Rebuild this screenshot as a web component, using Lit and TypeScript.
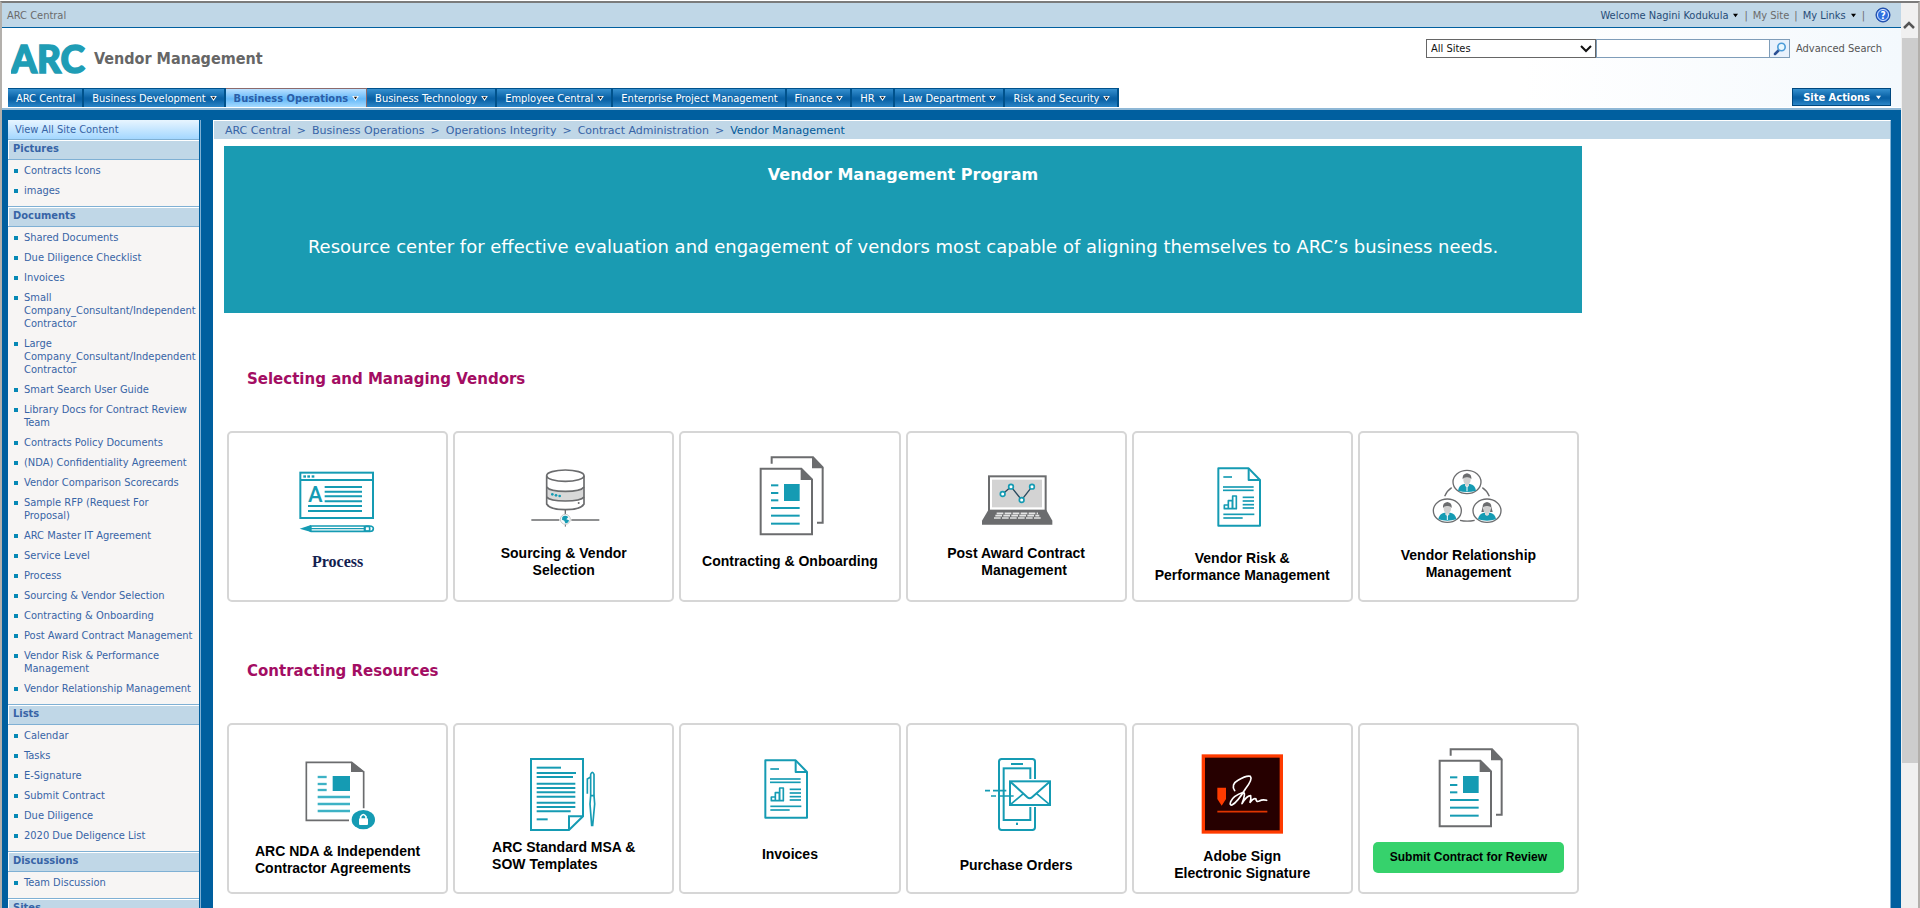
import { LitElement, html, svg, css, nothing } from "lit";
import { customElement } from "lit/decorators.js";
import { classMap } from "lit/directives/class-map.js";

interface Card {
  art: unknown;
  lines: string[];
  kind?: "serif" | "left" | "button" | "shift";
}

interface Section {
  title: string;
  items: string[];
}

const NAV: { label: string; menu: boolean; active?: boolean }[] = [
  { label: "ARC Central", menu: false },
  { label: "Business Development", menu: true },
  { label: "Business Operations", menu: true, active: true },
  { label: "Business Technology", menu: true },
  { label: "Employee Central", menu: true },
  { label: "Enterprise Project Management", menu: false },
  { label: "Finance", menu: true },
  { label: "HR", menu: true },
  { label: "Law Department", menu: true },
  { label: "Risk and Security", menu: true },
];

const CRUMBS = ["ARC Central", "Business Operations", "Operations Integrity", "Contract Administration"];

const SECTIONS: Section[] = [
  { title: "Pictures", items: ["Contracts Icons", "images"] },
  {
    title: "Documents",
    items: [
      "Shared Documents",
      "Due Diligence Checklist",
      "Invoices",
      "Small Company_Consultant/Independent Contractor",
      "Large Company_Consultant/Independent Contractor",
      "Smart Search User Guide",
      "Library Docs for Contract Review Team",
      "Contracts Policy Documents",
      "(NDA) Confidentiality Agreement",
      "Vendor Comparison Scorecards",
      "Sample RFP (Request For Proposal)",
      "ARC Master IT Agreement",
      "Service Level",
      "Process",
      "Sourcing & Vendor Selection",
      "Contracting & Onboarding",
      "Post Award Contract Management",
      "Vendor Risk & Performance Management",
      "Vendor Relationship Management",
    ],
  },
  { title: "Lists", items: ["Calendar", "Tasks", "E-Signature", "Submit Contract", "Due Diligence", "2020 Due Deligence List"] },
  { title: "Discussions", items: ["Team Discussion"] },
  { title: "Sites", items: [] },
];

const TEAL = "#159bb3";
const GREY = "#6b6c6e";

/* Artwork is drawn at three units to the pixel; h is the height in pixels above the caption. */
const art = (x: number, y: number, h: number, body: unknown) =>
  html`<svg width="217" height=${h} viewBox="${x} ${y} 651 ${h * 3}" aria-hidden="true">${body}</svg>`;

const hlines = (rows: number[][], w: number, c = TEAL) =>
  svg`<g stroke=${c} stroke-width=${w}>${rows.map(([x1, x2, y]) => svg`<line x1=${x1} x2=${x2} y1=${y} y2=${y} />`)}</g>`;

const processArt = art(30, 42, 120, svg`
  <g fill="none" stroke=${TEAL} stroke-width="6">
    <rect x="244" y="161" width="218" height="136" />
    <path d="M244 183H462" />
  </g>
  <g fill=${TEAL}><rect x="253" y="169" width="8" height="7" /><rect x="265" y="169" width="8" height="7" /><rect x="278" y="169" width="8" height="7" /></g>
  <text x="289" y="249" text-anchor="middle" font-family="Roboto, sans-serif" font-size="66" font-weight="500" fill=${TEAL}>A</text>
  ${hlines([[317, 429, 204], [317, 429, 218], [317, 429, 232], [317, 429, 247], [267, 429, 261], [267, 429, 276]], 6)}
  <path d="M242 329L276 318V339Z" fill=${TEAL} />
  <g fill="none" stroke=${TEAL} stroke-width="5">
    <path d="M262 328L276 321H452Q463 321 463 329T452 337H276Z" />
    <path d="M276 329H436M276 321V337M436 321V337" stroke-width="4" />
    <rect x="438" y="322" width="14" height="14" rx="4" />
  </g>`);

const sourcingArt = art(708, 42, 112, svg`
  <path d="M983 208Q1039 228 1095 208V238Q1039 256 983 238Z" fill="#d8d8d8" />
  <g fill="none" stroke=${GREY} stroke-width="5">
    <ellipse cx="1039" cy="170" rx="56" ry="17" />
    <path d="M983 170V255Q992 272 1039 272T1095 255V170" />
    <path d="M983 204Q992 217 1039 217T1095 204M983 234Q992 246 1039 246T1095 234" />
    <path d="M1039 273V286M937 303H1021M1057 303H1141" stroke-width="4" />
    <path d="M1039 312V323" stroke-width="3" />
  </g>
  <g fill=${TEAL}><circle cx="1000" cy="226" r="4" /><circle cx="1011" cy="229" r="4" /><circle cx="1022" cy="231" r="4" /></g>
  <circle cx="1079" cy="252" r="3" fill=${GREY} />
  <circle cx="1039" cy="301" r="15" fill="#f6fbfc" stroke="#c9c9c9" stroke-width="3" />
  <path d="M1030 294Q1038 287 1048 294L1042 301L1050 304Q1048 314 1039 313L1036 305L1029 302Z" fill=${TEAL} />`);

const contractingArt = (h: number) => art(36, 42, h, svg`
  <g fill="none" stroke=${GREY} stroke-width="6">
    <path d="M308 134V115H432L461 145V311H444" />
    <path d="M275 149H397L429 181V346H275Z" />
  </g>
  <path d="M429 114L464 148H429ZM395 147L431 183H395Z" fill=${GREY} />
  <rect x="345" y="195" width="47" height="51" fill=${TEAL} />
  ${hlines([[306, 328, 199], [306, 328, 222], [306, 328, 244], [306, 392, 267], [306, 392, 290], [306, 392, 314]], 6)}`);

const laptopArt = art(714, 42, 112, svg`
  <rect x="957" y="172" width="170" height="103" fill="#fff" stroke=${GREY} stroke-width="6" />
  <rect x="966" y="182" width="150" height="83" fill="#d3d3d3" />
  <path d="M955 273H1129L1147 305V317H936V305Z" fill=${GREY} />
  <path d="M980 283H1104M976 290H1108M972 297H1112" stroke="#e4e4e4" stroke-width="5" stroke-dasharray="20 4" />
  <path d="M998 225L1023 203L1055 243L1086 203" fill="none" stroke="#2b4a5e" stroke-width="4" />
  <g fill="#fff" stroke=${TEAL} stroke-width="5">
    <circle cx="998" cy="225" r="7" /><circle cx="1023" cy="203" r="7" /><circle cx="1055" cy="243" r="7" /><circle cx="1086" cy="203" r="7" />
  </g>`);

const reportArt = (h: number) => art(42, 42, h, svg`
  <g fill="none" stroke=${TEAL} stroke-width="6" stroke-linejoin="round">
    <path d="M295 148H386L420 183V320H295Z" />
    <path d="M386 148V183H420" />
    <path d="M313 258H325V269H313ZM325 245H337V269H325ZM338 231H349V269H338Z" stroke-width="5" />
  </g>
  ${hlines([[310, 336, 174], [309, 401, 204], [309, 401, 214], [368, 402, 235], [368, 402, 246], [368, 402, 257], [368, 402, 267], [310, 403, 286], [310, 368, 297]], 5)}`);

const person = (x: number, y: number, long: boolean) => svg`
  <g transform="translate(${x} ${y})">
    <ellipse rx="42" ry="35" fill="#fff" stroke=${GREY} stroke-width="4" />
    <path d="M-27 26Q-24 8 -9 6H9Q24 8 27 26Q0 34 -27 26Z" fill=${TEAL} />
    <path d="M-6 2H6V12L0 16L-6 12Z" fill="#d9d9d9" />
    <ellipse cy="-6" rx="11" ry="14" fill="#cfcfcf" />
    <path d="M-13 -8Q-15 -24 0 -26Q15 -24 13 -8Q9 -15 0 -14Q-9 -15 -13 -8Z" fill=${GREY} />
    ${long ? svg`<path d="M-13 -12L-17 4H-9ZM13 -12L17 4H9Z" fill=${GREY} />` : svg`<path d="M0 12V28" stroke="#fff" stroke-width="3" />`}
  </g>`;

const peopleArt = art(720, 42, 114, svg`
  <path d="M974 232Q981 215 995 206M1087 206Q1101 215 1108 232M1020 304Q1041 309 1064 304" fill="none" stroke=${GREY} stroke-width="4" />
  ${person(1041, 189, false)}${person(982, 275, false)}${person(1101, 275, true)}`);

const ndaArt = art(30, 228, 118, svg`
  <path d="M390 514H262V340H398L434 369V478" fill="none" stroke=${GREY} stroke-width="5" />
  <path d="M396 338L437 369H396Z" fill=${GREY} />
  <rect x="341" y="381" width="52" height="45" fill=${TEAL} />
  ${hlines([[296, 323, 384], [296, 323, 405], [296, 323, 423], [296, 393, 444], [296, 393, 465], [296, 393, 486]], 7, "#3db2c5")}
  <ellipse cx="433" cy="512" rx="35" ry="29" fill=${TEAL} />
  <rect x="420" y="508" width="27" height="20" rx="3" fill="#fff" />
  <path d="M425 509V503Q433 490 441 503V509" fill="none" stroke="#fff" stroke-width="5" />`);

const msaArt = art(708, 228, 114, svg`
  <path d="M936 330H1092V502L1050 543H936Z" fill="none" stroke=${TEAL} stroke-width="6" />
  <path d="M1050 543V502H1092" fill="none" stroke=${TEAL} stroke-width="6" />
  ${hlines([[953, 1026, 356], [953, 1071, 372], [953, 1062, 384], [953, 1069, 404], [953, 1069, 417], [953, 1069, 430], [953, 1069, 443], [953, 1069, 461], [953, 1069, 474], [953, 1055, 487], [953, 986, 511]], 6)}
  <path d="M1115 376Q1120 364 1125 376V440L1127 465L1121 529H1118L1113 465L1115 440Z" fill="#fff" stroke=${TEAL} stroke-width="5" />
  <path d="M1115 384L1105 390V434M1114 440H1126" fill="none" stroke=${TEAL} stroke-width="5" />`);

const phoneArt = art(714, 33, 132, svg`
  <rect x="987" y="135" width="108" height="213" rx="8" fill="none" stroke=${TEAL} stroke-width="6" />
  <rect x="1001" y="163" width="80" height="155" fill="none" stroke=${TEAL} stroke-width="6" />
  <path d="M1023 150H1059" stroke=${TEAL} stroke-width="6" />
  <rect x="1038" y="326" width="6" height="7" fill=${TEAL} />
  <rect x="1012" y="195" width="136" height="84" fill="#fff" />
  <path d="M945 230H960M969 230H1009M963 246H978M985 246H1031" stroke=${TEAL} stroke-width="5" />
  <g fill="none" stroke=${TEAL} stroke-width="6">
    <rect x="1020" y="202" width="120" height="71" />
    <path d="M1021 203L1072 250Q1079 256 1086 250L1139 203" />
    <path d="M1021 272L1061 238M1139 272L1099 238" stroke-width="5" />
  </g>`);

const adobeArt = art(0, 0, 123, svg`
  <rect x="208" y="93" width="234" height="228" fill="#260000" stroke="#ff3b00" stroke-width="10" />
  <path d="M250 188H276V222L263 242L250 222Z" fill="#ff3b00" />
  <path d="M250 260H400" stroke="#e03500" stroke-width="5" />
  <path d="M302 197Q290 178 312 166Q338 150 349 154Q357 162 334 192Q310 232 294 240Q286 242 290 230Q298 212 328 202Q336 204 324 236Q338 212 350 212Q352 220 348 232Q360 218 366 222Q366 232 376 228Q386 222 398 226" fill="none" stroke="#fff" stroke-width="5" stroke-linecap="round" stroke-linejoin="round" />`);

const GROUPS: { title: string; cards: Card[] }[] = [
  {
    title: "Selecting and Managing Vendors",
    cards: [
      { art: processArt, lines: ["Process"], kind: "serif" },
      { art: sourcingArt, lines: ["Sourcing & Vendor", "Selection"] },
      { art: contractingArt(120), lines: ["Contracting & Onboarding"] },
      { art: laptopArt, lines: ["Post Award Contract", "Management"], kind: "shift" },
      { art: reportArt(117), lines: ["Vendor Risk &", "Performance Management"] },
      { art: peopleArt, lines: ["Vendor Relationship", "Management"] },
    ],
  },
  {
    title: "Contracting Resources",
    cards: [
      { art: ndaArt, lines: ["ARC NDA & Independent", "Contractor Agreements"], kind: "left" },
      { art: msaArt, lines: ["ARC Standard MSA &", "SOW Templates"], kind: "left" },
      { art: reportArt(121), lines: ["Invoices"] },
      { art: phoneArt, lines: ["Purchase Orders"] },
      { art: adobeArt, lines: ["Adobe Sign", "Electronic Signature"] },
      { art: contractingArt(117), lines: ["Submit Contract for Review"], kind: "button" },
    ],
  },
];

const caret = (outlined: boolean) => html`<svg class="caret" width="7" height="5" viewBox="0 0 8 6" aria-hidden="true">
  ${outlined
    ? svg`<path d="M0 0H8L4 6Z" fill="#fff" /><path d="M2 1H6L4 4Z" fill="#111" />`
    : svg`<path d="M1 1H7L4 5Z" fill="currentColor" />`}
</svg>`;

@customElement("app-root")
export class AppRoot extends LitElement {
  static styles = css`
    :host {
      display: flex;
      height: 100vh;
      overflow: hidden;
      box-sizing: border-box;
      border-top: 1px solid #fff;
      font: 11px/13px "DejaVu Sans Condensed", "DejaVu Sans", sans-serif;
      color: #3764a6;
      background: #fff;
    }
    * { box-sizing: border-box; }
    a { color: inherit; text-decoration: none; }
    a:hover { text-decoration: underline; }
    h1, h2, h3, p, ul { margin: 0; padding: 0; }
    ul { list-style: none; }
    button { font: inherit; cursor: pointer; }
    .window {
      flex: 1;
      display: flex;
      min-width: 0;
      border: 2px solid #7b7b7b;
      border-left-color: #b3b0ac;
      border-right-color: #b3b0ac;
      border-bottom: 0;
    }
    .page { flex: 1; min-width: 0; display: flex; flex-direction: column; }
    .top {
      display: flex;
      align-items: center;
      justify-content: space-between;
      height: 25px;
      padding: 0 9px 0 5px;
      background: #c0d7e7;
      border-bottom: 1px solid #005f9f;
      color: #6b6b6b;
    }
    .user { display: flex; align-items: center; gap: 5px; }
    .user .dark { color: #264c77; display: flex; align-items: center; gap: 4px; }
    .user .dark svg { color: #000; }
    .help { display: block; }
    .brand {
      display: flex;
      justify-content: space-between;
      align-items: flex-start;
      height: 59px;
      background: linear-gradient(90deg, #fff 80%, #f4f9fd);
    }
    .name { display: flex; align-items: center; gap: 5px; padding: 8px 0 0 9px; }
    .logo { display: block; }
    h1 { font-size: 16px; line-height: 20px; color: #666; }
    .search { display: flex; align-items: center; padding: 11px 19px 0 0; color: #555; }
    .search select {
      width: 170px;
      height: 19px;
      padding: 0 4px;
      border: 1px solid #666;
      border-radius: 0;
      background: #fff url("data:image/svg+xml,%3Csvg xmlns='http://www.w3.org/2000/svg' width='12' height='8'%3E%3Cpath d='M1 1L6 6L11 1' fill='none' stroke='%23111' stroke-width='2'/%3E%3C/svg%3E") no-repeat right 3px center;
      appearance: none;
      font: inherit;
      color: #111;
    }
    .search input { width: 174px; height: 19px; border: 1px solid #7f9db9; border-radius: 0; padding: 0 4px; font: inherit; }
    .search button {
      width: 20px;
      height: 19px;
      padding: 0;
      border: 1px solid #7f9db9;
      border-left: 0;
      background: #e8f1fc;
      display: grid;
      place-items: center;
    }
    .search a { margin-left: 6px; }
    .menu {
      display: flex;
      justify-content: space-between;
      align-items: flex-end;
      padding: 0 10px 0 6px;
      height: 20px;
      margin-bottom: 1px;
      background: linear-gradient(90deg, #fff 80%, #f4f9fd);
    }
    .tabs { display: flex; }
    .tabs a {
      display: flex;
      align-items: center;
      gap: 4px;
      height: 19px;
      padding: 0 7px 0 8px;
      white-space: nowrap;
      color: #fff;
      border-right: 2px solid #00528c;
      border-top: 1px solid #00528c;
      background: linear-gradient(#3690cf, #0a62a6 50%, #0a62a6 60%, #2b86c8);
    }
    .tabs a.active {
      color: #2a5ea8;
      font-weight: bold;
      border-color: #8c6a6c;
      border-right-width: 1px;
      background: linear-gradient(#b9e0ff, #64b8f8 55%, #a5daff);
    }
    .actions {
      display: flex;
      align-items: center;
      gap: 5px;
      height: 18px;
      margin-bottom: 1px;
      padding: 0 8px 0 10px;
      border: 1px solid #00487f;
      color: #fff;
      font-weight: bold;
      background: linear-gradient(#3690cf, #0a62a6 50%, #0a62a6 60%, #2b86c8);
    }
    .body {
      flex: 1;
      min-height: 0;
      display: flex;
      align-items: stretch;
      padding: 10px 10px 0 6px;
      border-top: 2px solid #8fb8d6;
      background: #005f9f;
    }
    .side {
      flex: none;
      width: 193px;
      margin-right: 12px;
      border-right: 1px solid #7fb0d4;
      background: #005f9f;
    }
    .sheet { width: 191px; height: 100%; background: #f7f5f4; overflow: hidden; }
    .all { display: block; height: 19px; padding: 3px 7px; background: linear-gradient(#e8f5ff, #a3d7ff); }
    .side h3 {
      height: 21px;
      padding: 2px 5px;
      font-size: 11px;
      line-height: 13px;
      background: #c0d7e7;
      border-top: 1px solid #7fb0d4;
      border-bottom: 1px solid #7fb0d4;
      box-shadow: inset 1px 1px #fff;
    }
    .side ul { padding: 4px 4px 2px 16px; }
    .side li { margin-bottom: 7px; }
    .side li a { display: block; }
    .side li::before {
      content: "";
      float: left;
      width: 4px;
      height: 4px;
      margin: 5px 0 0 -10px;
      background: #0688b5;
    }
    .main { flex: 1; min-width: 0; background: #fff; border-right: 1px solid #7fb0d4; border-left: 1px solid #fff; border-top: 1px solid #fff; }
    .crumbs {
      display: flex;
      align-items: center;
      gap: 6px;
      height: 18px;
      padding: 0 11px;
      background: #c0d7e7;
      font-family: "DejaVu Sans", sans-serif;
    }
    .crumbs b { font-weight: normal; color: #005a99; }
    .content { max-width: 1378px; padding: 7px 10px; font-family: "DejaVu Sans", sans-serif; }
    .banner { height: 167px; padding: 18px 24px; background: #1a9bb2; color: #fff; text-align: center; }
    .banner h2 { font-size: 16px; line-height: 22px; }
    .banner p { margin-top: 49px; font-size: 18px; line-height: 24px; }
    .group { padding: 56px 3px 0; }
    .group + .group { padding-top: 59px; }
    .group h2 { padding: 0 20px; font-size: 15px; line-height: 20px; color: #a30d63; }
    .cards { display: grid; grid-template-columns: repeat(6, 1fr); gap: 5px; margin-top: 42px; }
    .card {
      display: flex;
      flex-direction: column;
      align-items: center;
      height: 171px;
      border: 2px solid #d6d6d6;
      border-radius: 5px;
      color: #000;
      font: bold 14px/17px "Liberation Sans", Arial, sans-serif;
      text-align: center;
      background: #fff;
    }
    .card svg { display: block; flex: none; }
    .label span { display: block; }
    .left .label { text-align: left; }
    .shift span + span { padding-left: 16px; }
    .serif { font: bold 16px/17px "Liberation Serif", serif; color: #12204f; }
    .submit {
      width: 191px;
      height: 31px;
      padding: 0;
      border: 0;
      border-radius: 5px;
      background: #36d26c;
      color: #000;
      font-size: 12px;
    }
    .scroll { flex: none; width: 17px; background: #f0f0f0; }
    .scroll svg { display: block; margin-top: 14px; }
    .thumb { height: 725px; margin: 7px 0 0 1px; background: #cdcdcd; }
  `;

  private card(c: Card) {
    const classes = { card: true, left: c.kind === "left", shift: c.kind === "shift", serif: c.kind === "serif" };
    if (c.kind === "button") {
      return html`<div class=${classMap(classes)}>${c.art}<button class="submit">${c.lines[0]}</button></div>`;
    }
    return html`<a href="#" class=${classMap(classes)}>${c.art}<span class="label">${c.lines.map((l) => html`<span>${l}</span>`)}</span></a>`;
  }

  render() {
    return html`
      <div class="window">
        <div class="page">
          <div class="top">
            <a href="#">ARC Central</a>
            <div class="user">
              <a href="#" class="dark">Welcome Nagini Kodukula ${caret(false)}</a><span>|</span>
              <a href="#">My Site</a><span>|</span>
              <a href="#" class="dark">My Links ${caret(false)}</a><span>|</span>
              <a href="#" aria-label="Help" class="help"><svg class="help" width="22" height="16" viewBox="0 0 22 16">
                <circle cx="13" cy="8" r="7" fill="#2f6fe0" stroke="#16419c" />
                <circle cx="13" cy="8" r="5.500" fill="none" stroke="#dfeaff" />
                <text x="13" y="11.500" text-anchor="middle" font-size="10" font-weight="bold" fill="#fff">?</text>
              </svg></a>
            </div>
          </div>
          <header class="brand">
            <div class="name">
              <svg class="logo" width="78" height="46" viewBox="0 0 78 46" role="img" aria-label="ARC">
                <text x="0" y="37" font-family="Lato, sans-serif" font-weight="900" font-size="37" fill="#1f9db5" stroke="#1f9db5" stroke-width="1.500">ARC</text>
              </svg>
              <h1>Vendor Management</h1>
            </div>
            <form class="search">
              <select aria-label="Search scope"><option>All Sites</option></select>
              <input type="text" aria-label="Search text" />
              <button type="button" aria-label="Search"><svg width="14" height="14" viewBox="0 0 14 14">
                <path d="M2 12L6 8" stroke="#2b4f94" stroke-width="2.500" stroke-linecap="round" />
                <circle cx="8.500" cy="5" r="3.700" fill="#e9f7ff" stroke="#4b9bd8" stroke-width="1.600" />
              </svg></button>
              <a href="#">Advanced Search</a>
            </form>
          </header>
          <div class="menu">
            <nav class="tabs">
              ${NAV.map((n) => html`<a href="#" class=${classMap({ active: !!n.active })}>${n.label}${n.menu ? caret(true) : nothing}</a>`)}
            </nav>
            <button class="actions">Site Actions ${caret(false)}</button>
          </div>
          <div class="body">
            <aside class="side">
              <div class="sheet">
                <a href="#" class="all">View All Site Content</a>
                ${SECTIONS.map((s) => html`<h3>${s.title}</h3><ul>${s.items.map((i) => html`<li><a href="#">${i}</a></li>`)}</ul>`)}
              </div>
            </aside>
            <main class="main">
              <nav class="crumbs">
                ${CRUMBS.map((c) => html`<a href="#">${c}</a><span>&gt;</span>`)}<b>Vendor Management</b>
              </nav>
              <div class="content">
                <section class="banner">
                  <h2>Vendor Management Program</h2>
                  <p>Resource center for effective evaluation and engagement of vendors most capable of aligning themselves to ARC’s business needs.</p>
                </section>
                ${GROUPS.map((g) => html`<section class="group"><h2>${g.title}</h2><div class="cards">${g.cards.map((c) => this.card(c))}</div></section>`)}
              </div>
            </main>
          </div>
        </div>
        <div class="scroll" aria-hidden="true">
          <svg width="15" height="14" viewBox="0 0 15 14"><path d="M3 11L8 6L13 11" fill="none" stroke="#555" stroke-width="2.500" /></svg>
          <div class="thumb"></div>
        </div>
      </div>
    `;
  }
}
